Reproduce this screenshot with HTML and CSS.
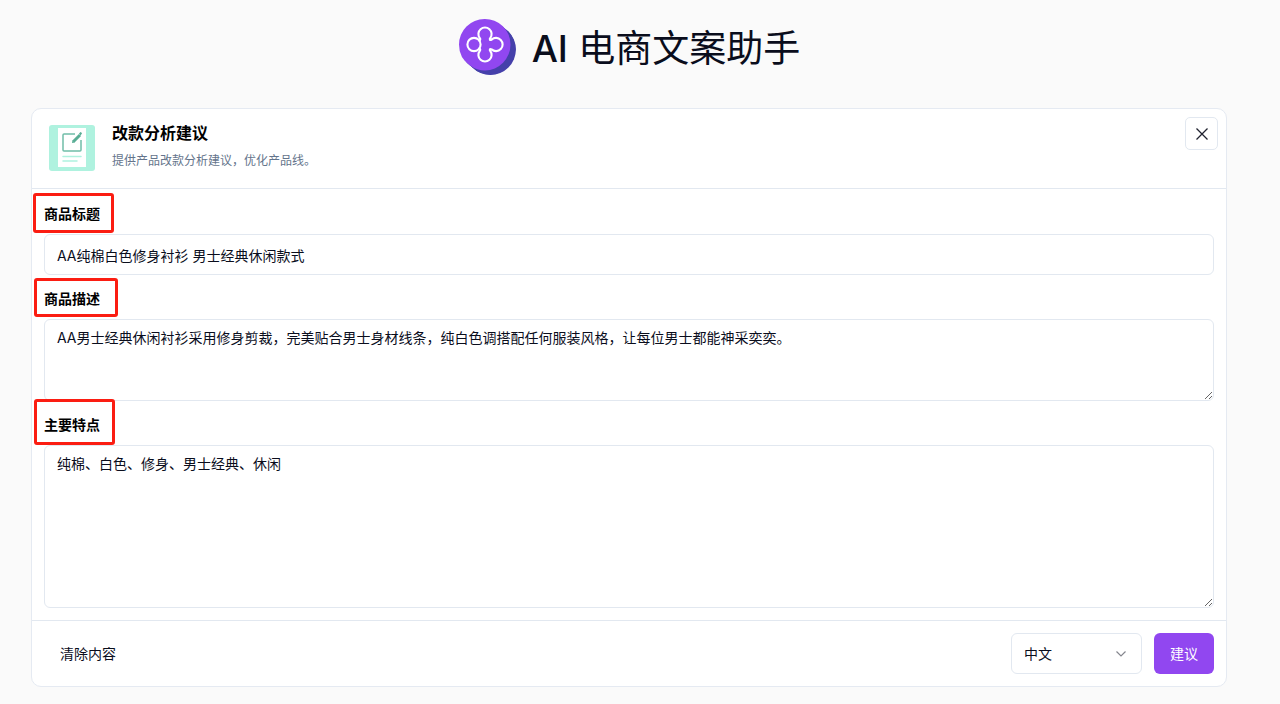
FILE: index.html
```html
<!DOCTYPE html>
<html lang="zh-CN">
<head>
<meta charset="utf-8">
<meta name="viewport" content="width=device-width, initial-scale=1">
<title>AI 电商文案助手</title>
<link rel="stylesheet" href="styles.css">
</head>
<body>
<div class="page">
  <header class="brand">
    <svg class="brand-logo" viewBox="0 0 58 58" aria-hidden="true">
      <path d="M44.400 8.400 50.400 13.400A25.500 25.500 0 0 1 14.400 49.500L8.400 44.500Z" fill="#4540aa"/>
      <circle cx="32.400" cy="31.500" r="25.500" fill="#4540aa"/>
      <path d="M26.500 1A25.500 25.500 0 0 1 52.500 26.500A26 26 0 0 1 27 52.500Q19 52.500 12 47.500Q1 40 1 26.500A25.500 25.500 0 0 1 26.500 1Z" fill="#9147f0"/>
      <g fill="none" stroke="#fff" stroke-width="2.100" stroke-linecap="round">
        <circle cx="16" cy="26.500" r="6.600"/>
        <path d="M21.300 22.600C22.500 22 22.500 21 21.700 20A6.600 6.600 0 1 1 32.300 20C31.300 21.200 31.800 22.800 33.600 21.600A6.600 6.600 0 1 1 33.600 31.400C31.800 30.200 31.300 31.800 32.300 33A6.600 6.600 0 1 1 21.700 33C22.500 32 22.500 31 21.300 30.400"/>
      </g>
    </svg>
    <h1 class="brand-title"><span class="brand-latin">AI</span> 电商文案助手</h1>
  </header>

  <form class="card">
    <div class="card-header">
      <svg class="tool-icon" viewBox="0 0 46 46" aria-hidden="true">
        <rect width="46" height="46" rx="3" fill="#aff2df"/>
        <rect x="9" y="3" width="28" height="39" fill="#fff"/>
        <path d="M26 9H15q-1 0-1 1v15q0 1 1 1h16q1 0 1-1V15" fill="none" stroke="#70bda8" stroke-width="1.500"/>
        <path d="M24.500 16.500 31 10" stroke="#58ad94" stroke-width="3"/>
        <path d="m23 18 .5-3 2.500 2.500zM30 8.500l1.500-1.500q1 0 1.500 1.500L31.500 10.500z" fill="#58ad94"/>
        <path d="M14 31.500h18M14 36h14" stroke="#aff2df" stroke-width="1.500" stroke-linecap="round"/>
      </svg>
      <div class="card-heading">
        <h2 class="card-title">改款分析建议</h2>
        <p class="card-subtitle">提供产品改款分析建议，优化产品线。</p>
      </div>
      <button class="close-button" type="button" aria-label="关闭">
        <svg class="close-icon" viewBox="0 0 12 12" aria-hidden="true"><path d="m.5.500 11 11m0-11-11 11" fill="none" stroke="#20222f" stroke-width="1.300"/></svg>
      </button>
    </div>

    <div class="card-body">
      <label class="field-label" for="title"><span class="label-text">商品标题<span class="mark mark-title"></span></span></label>
      <input class="field" id="title" type="text" value="AA纯棉白色修身衬衫 男士经典休闲款式">
      <label class="field-label" for="description"><span class="label-text">商品描述<span class="mark mark-description"></span></span></label>
      <textarea class="field field-description" id="description">AA男士经典休闲衬衫采用修身剪裁，完美贴合男士身材线条，纯白色调搭配任何服装风格，让每位男士都能神采奕奕。</textarea>
      <label class="field-label" for="features"><span class="label-text">主要特点<span class="mark mark-features"></span></span></label>
      <textarea class="field field-features" id="features">纯棉、白色、修身、男士经典、休闲</textarea>
    </div>

    <div class="card-footer">
      <button class="clear-button" type="reset">清除内容</button>
      <div class="select-wrap">
        <select class="language" aria-label="语言"><option>中文</option><option>English</option></select>
        <svg class="chevron" viewBox="0 0 10 6" aria-hidden="true"><path d="m.5.500 4.500 4.500 4.500-4.500" fill="none" stroke="#85868e" stroke-width="1.200"/></svg>
      </div>
      <button class="submit-button" type="button">建议</button>
    </div>
  </form>
</div>
</body>
</html>
```
FILE: styles.css
```css
* {
  box-sizing: border-box;
}

body {
  margin: 0;
  background: #fafafa;
  color: #0a0d1c;
  font: 14px/20px Inter, "Noto Sans CJK SC", sans-serif;
}

button,
input,
select,
textarea {
  font: inherit;
  color: inherit;
}

.page {
  padding: 17px 53px 18px 31px;
}

.brand {
  display: flex;
  align-items: center;
  justify-content: center;
  gap: 16px;
  margin-bottom: 31px;
}

.brand-logo {
  width: 58px;
  height: 58px;
}

.brand-title {
  margin: 0;
  padding-top: 4px;
  font-size: 37px;
  line-height: 56px;
  font-weight: 400;
}

.brand-latin {
  font-weight: 500;
}

.card {
  background: #fff;
  border: 1px solid #e5eaf2;
  border-radius: 10px;
}

.card-header {
  display: flex;
  align-items: flex-start;
  height: 80px;
  padding: 8px 8px 0 17px;
  border-bottom: 1px solid #e2e8f0;
}

.tool-icon {
  width: 46px;
  height: 46px;
  margin-top: 8px;
}

.card-heading {
  flex: 1;
  margin-left: 17px;
}

.card-title {
  margin: 4px 0 8px;
  color: #000;
  font-size: 16px;
  line-height: 24px;
  font-weight: 700;
}

.card-subtitle {
  margin: 0;
  color: #64748b;
  font-size: 12px;
  line-height: 16px;
}

.close-button {
  display: grid;
  place-items: center;
  width: 33px;
  height: 33px;
  padding: 0;
  background: #fff;
  border: 1px solid #e2e8f0;
  border-radius: 5px;
}

.close-icon {
  width: 12px;
  height: 12px;
}

.card-body {
  padding: 1px 12px 12px;
}

.field-label {
  display: block;
  padding: 14px 0 10px;
  color: #000;
  font-weight: 700;
}

.label-text {
  position: relative;
}

.mark {
  position: absolute;
  border: 3px solid #fb1d12;
  border-radius: 3px;
  pointer-events: none;
}

.mark-title {
  inset: -12px -14px -11px -11px;
}

.mark-description {
  inset: -12px -18px -10px -10px;
}

.mark-features {
  inset: -17px -15px -12px -10px;
}

.field {
  display: block;
  width: 100%;
  height: 41px;
  padding: 8px 12px;
  background: #fff;
  border: 1px solid #e2e8f0;
  border-radius: 6px;
  outline: none;
}

.field-description {
  height: 82px;
}

.field-features {
  height: 163px;
}

.card-footer {
  display: flex;
  align-items: center;
  gap: 12px;
  padding: 12px;
  border-top: 1px solid #e2e8f0;
}

.clear-button {
  margin-right: auto;
  padding: 10px 16px;
  background: none;
  border: 0;
}

.select-wrap {
  position: relative;
}

.language {
  display: block;
  width: 131px;
  height: 41px;
  padding: 0 12px;
  appearance: none;
  background: #fff;
  border: 1px solid #e2e8f0;
  border-radius: 6px;
}

.chevron {
  position: absolute;
  top: 18px;
  right: 16px;
  width: 10px;
  height: 6px;
  pointer-events: none;
}

.submit-button {
  height: 41px;
  padding: 0 16px;
  background: #9147f0;
  border: 0;
  border-radius: 6px;
  color: #fff;
}
```
